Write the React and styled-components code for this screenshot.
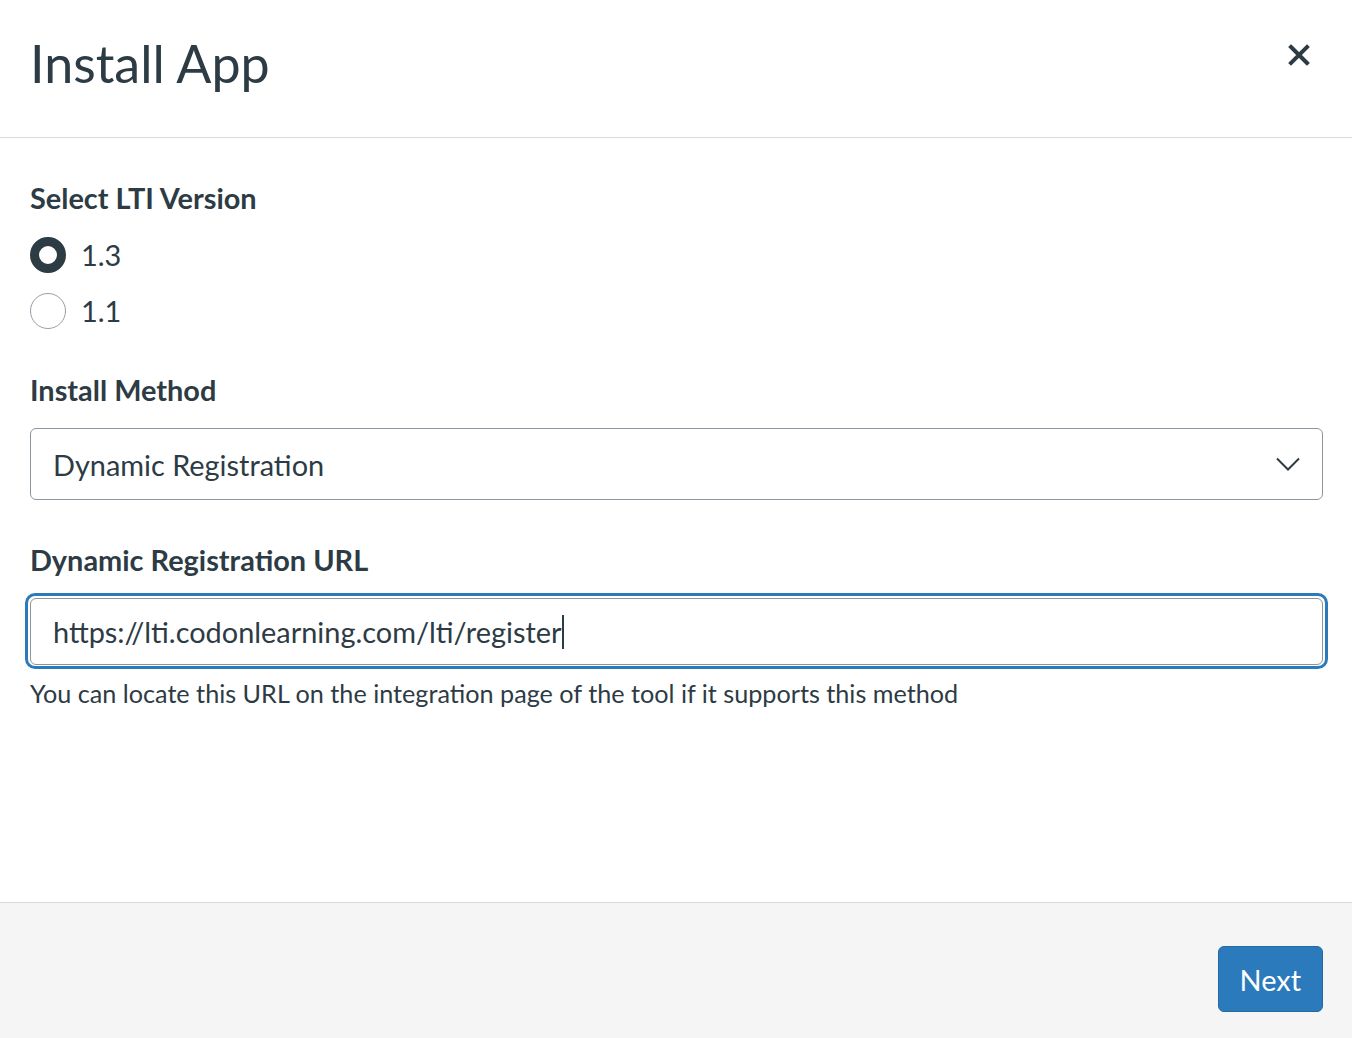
import React from "react";
import styled, { createGlobalStyle } from "styled-components";

const GlobalStyle = createGlobalStyle`
  html, body { margin: 0; padding: 0; background: #fff; }
  body { font-family: Lato, "Noto Sans", sans-serif; color: #2d3b45; overflow: hidden; }
  * { box-sizing: border-box; }
`;

const Modal = styled.div`
  width: 1352px;
  height: 1038px;
  display: flex;
  flex-direction: column;
  overflow: hidden;
`;

const Header = styled.header`
  height: 138px;
  flex: none;
  display: flex;
  align-items: center;
  justify-content: space-between;
  padding: 0 40px 10px 30px;
  border-bottom: 1px solid #d7dadd;
`;

const Title = styled.h1`
  margin: 0;
  font-size: 52px;
  font-weight: 400;
  line-height: 1.25;
  letter-spacing: 0;
`;

const CloseButton = styled.button`
  border: 0;
  background: none;
  padding: 0;
  width: 26px;
  height: 26px;
  display: flex;
  align-items: center;
  justify-content: center;
  color: #2d3b45;
  margin-top: -18px;
  cursor: pointer;
`;

const Body = styled.main`
  flex: 1;
  padding: 42px 29px 0 30px;
  display: flex;
  flex-direction: column;
`;

const Label = styled.div`
  font-size: 28.9px;
  font-weight: 700;
  line-height: 35px;
  margin-top: ${(p) => p.$mt || 0}px;
`;

const RadioGroup = styled.div`
  display: flex;
  flex-direction: column;
  gap: 20px;
  margin-top: 22px;
`;

const RadioRow = styled.label`
  display: flex;
  align-items: center;
  gap: 15px;
  height: 36px;
  font-size: 28.9px;
  line-height: 36px;
`;

const RadioCircle = styled.span`
  width: 36px;
  height: 36px;
  border-radius: 50%;
  flex: none;
  background: #fff;
  border: ${(p) => (p.$checked ? "9px solid #2d3b45" : "1px solid #959ea6")};
`;

const SelectBox = styled.div`
  margin-top: 21px;
  height: 72px;
  border: 1px solid #8b969e;
  border-radius: 6px;
  display: flex;
  align-items: center;
  justify-content: space-between;
  padding: 0 22px 0 22px;
  font-size: 28.9px;
`;

const InputWrap = styled.div`
  position: relative;
  margin-top: 21px;
  &::after {
    content: "";
    position: absolute;
    inset: -5px -5px -4px -5px;
    border: 3px solid #2b7abc;
    border-radius: 10px;
    pointer-events: none;
  }
`;

const Input = styled.div`
  height: 67px;
  border: 1px solid #8b969e;
  border-radius: 6px;
  display: flex;
  align-items: center;
  padding: 0 22px;
  font-size: 28.9px;
`;

const Caret = styled.span`
  display: inline-block;
  width: 2px;
  height: 34px;
  background: #2d3b45;
  margin-left: 0;
  vertical-align: middle;
`;

const Help = styled.div`
  margin-top: 10px;
  font-size: 25.2px;
  line-height: 37px;
`;

const Footer = styled.footer`
  flex: none;
  height: 136px;
  background: #f5f5f5;
  border-top: 1px solid #d7dadd;
  display: flex;
  justify-content: flex-end;
  align-items: flex-start;
  padding: 43px 29px 0 30px;
`;

const PrimaryButton = styled.button`
  height: 66px;
  padding: 0 21px;
  background: #2b7abc;
  color: #fff;
  border: 1px solid #2469a3;
  border-radius: 6px;
  font-family: Lato, "Noto Sans", sans-serif;
  font-size: 28.9px;
  font-weight: 400;
  cursor: pointer;
`;

const XIcon = () => (
  <svg width="22" height="22" viewBox="0 0 22 22">
    <path d="M3 3 L19 19 M19 3 L3 19" stroke="currentColor" strokeWidth="4" strokeLinecap="square" />
  </svg>
);

const Chevron = () => (
  <svg width="24" height="14" viewBox="0 0 24 14">
    <path d="M1 1.5 L12 12.5 L23 1.5" fill="none" stroke="#2d3b45" strokeWidth="2" />
  </svg>
);

export default function App() {
  return (
    <>
      <GlobalStyle />
      <Modal>
        <Header>
          <Title>Install App</Title>
          <CloseButton aria-label="Close">
            <XIcon />
          </CloseButton>
        </Header>
        <Body>
          <Label>Select LTI Version</Label>
          <RadioGroup>
            <RadioRow>
              <RadioCircle $checked />
              1.3
            </RadioRow>
            <RadioRow>
              <RadioCircle />
              1.1
            </RadioRow>
          </RadioGroup>
          <Label $mt={43}>Install Method</Label>
          <SelectBox>
            <span>Dynamic Registration</span>
            <Chevron />
          </SelectBox>
          <Label $mt={42}>Dynamic Registration URL</Label>
          <InputWrap>
            <Input>
              <span>https://lti.codonlearning.com/lti/register</span>
              <Caret />
            </Input>
          </InputWrap>
          <Help>You can locate this URL on the integration page of the tool if it supports this method</Help>
        </Body>
        <Footer>
          <PrimaryButton>Next</PrimaryButton>
        </Footer>
      </Modal>
    </>
  );
}
